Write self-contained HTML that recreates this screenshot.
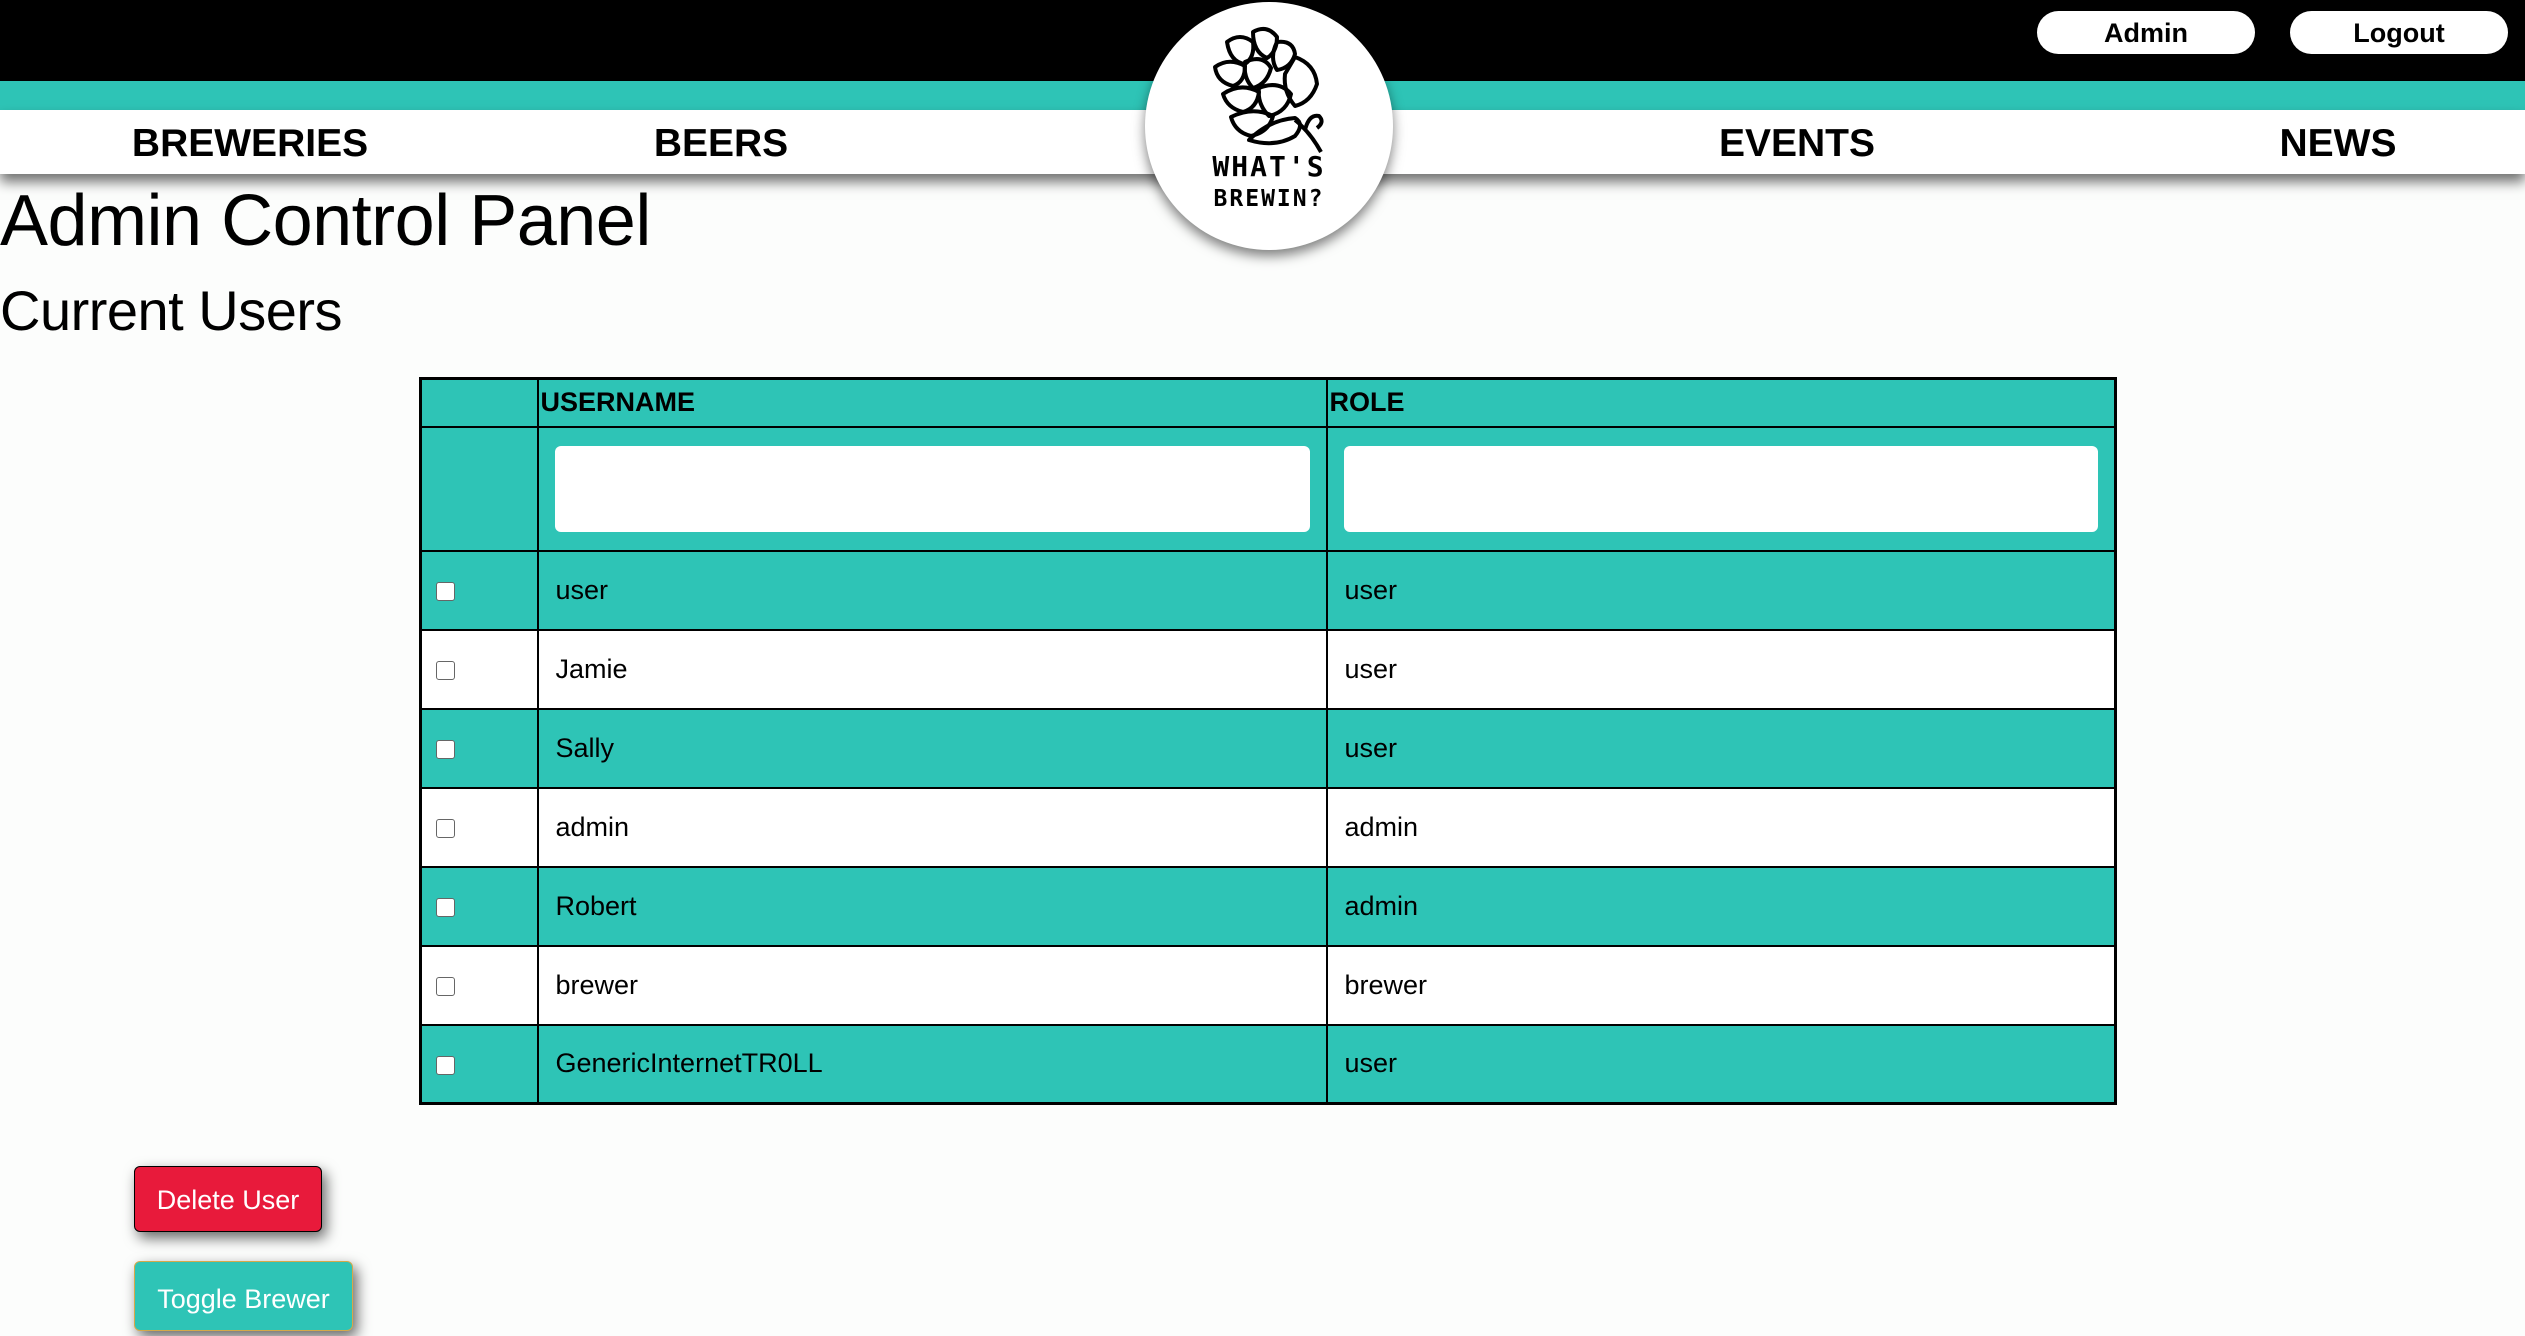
<!DOCTYPE html>
<html><head><meta charset="utf-8"><style>
*{margin:0;padding:0;box-sizing:border-box}
body{width:2525px;height:1312px;overflow:hidden;background:#fcfdfc;font-family:"Liberation Sans",sans-serif;position:relative;color:#000}
.blk{position:absolute;left:0;top:0;width:2525px;height:81px;background:#000}
.tl{position:absolute;left:0;top:81px;width:2525px;height:29px;background:#2ec4b6}
.nav{position:absolute;left:0;top:110px;width:2525px;height:64px;background:#fff;box-shadow:0 8px 12px rgba(0,0,0,.55)}
.nav span{position:absolute;top:12px;font-weight:bold;font-size:39px;transform:translateX(-50%)}
.btn{position:absolute;top:11px;height:43px;width:218px;background:#fff;border-radius:22px;text-align:center;font-weight:bold;font-size:27px;line-height:45px}
.logo{position:absolute;left:1145px;top:2px;width:248px;height:248px;border-radius:50%;background:#fff;box-shadow:0 6px 12px rgba(0,0,0,.5)}
h1{position:absolute;left:0;top:180px;font-weight:normal;font-size:72px;letter-spacing:-0.5px}
h2{position:absolute;left:0;top:278px;font-weight:normal;font-size:56px;letter-spacing:-0.5px}
table{position:absolute;left:419px;top:377px;width:1698px;border-collapse:collapse;border:3px solid #000;font-size:27px}
td,th{border:2px solid #000;text-align:left;vertical-align:middle}
th{height:48px;background:#2ec4b6;font-size:27px;padding-left:2px}
tr.f td{height:124px;background:#2ec4b6}
tr.f div{margin:0 16px;height:86px;background:#fff;border-radius:6px}
tr.r td{height:79px;padding-left:17px}
tr.t td{background:#2ec4b6}
tr.w td{background:#fff}
.cb{display:inline-block;width:19px;height:19px;border:1.5px solid #666;border-radius:3px;background:#fff;margin-left:-3px;vertical-align:middle}
.b{position:absolute;left:134px;color:#fff;font-size:27px;text-align:center;border-radius:6px;box-shadow:4px 6px 14px rgba(0,0,0,.6)}
</style></head><body>
<div class="blk"></div><div class="tl"></div>
<div class="nav">
<span style="left:250px">BREWERIES</span><span style="left:721px">BEERS</span><span style="left:1797px">EVENTS</span><span style="left:2338px">NEWS</span>
</div>
<div class="btn" style="left:2037px">Admin</div>
<div class="btn" style="left:2290px">Logout</div>
<div class="logo">
<svg width="248" height="248" viewBox="0 0 248 248" fill="none" stroke="#000" stroke-width="4" stroke-linejoin="round">
<path d="M82 40 Q95 30 108 40 Q110 55 100 62 Q85 60 82 40Z"/>
<path d="M108 30 Q122 22 132 35 Q132 50 122 56 Q108 50 108 30Z"/>
<path d="M132 40 Q148 38 150 52 Q146 66 132 68 Q124 56 132 40Z"/>
<path d="M70 65 Q84 55 100 64 Q100 80 88 84 Q72 80 70 65Z"/>
<path d="M100 60 Q118 52 126 66 Q122 82 108 86 Q98 76 100 60Z"/>
<path d="M150 55 Q170 62 172 82 Q166 100 150 104 Q138 90 140 72Z"/>
<path d="M78 92 Q96 80 114 90 Q112 106 98 110 Q82 106 78 92Z"/>
<path d="M114 86 Q134 78 146 92 Q142 110 124 114 Q112 102 114 86Z"/>
<path d="M86 115 Q108 104 128 114 Q124 130 106 134 Q90 130 86 115Z"/>
<path d="M104 138 Q124 118 150 116 Q160 122 150 134 Q130 146 104 138Z"/>
<path d="M150 118 Q165 130 176 150"/>
<path d="M160 128 Q164 112 174 114 Q180 120 172 126"/>
</svg>
<div style="position:absolute;left:0;width:248px;top:150px;text-align:center;font-family:'DejaVu Sans Mono',monospace;font-weight:bold;font-size:28px;line-height:30px;letter-spacing:2px">WHAT'S<br><span style="font-size:23px">BREWIN?</span></div>
</div>
<h1>Admin Control Panel</h1>
<h2>Current Users</h2>
<table>
<tr><th style="width:117px"></th><th style="width:789px">USERNAME</th><th>ROLE</th></tr>
<tr class="f"><td></td><td><div></div></td><td><div></div></td></tr>
<tr class="r t"><td><span class="cb"></span></td><td>user</td><td>user</td></tr>
<tr class="r w"><td><span class="cb"></span></td><td>Jamie</td><td>user</td></tr>
<tr class="r t"><td><span class="cb"></span></td><td>Sally</td><td>user</td></tr>
<tr class="r w"><td><span class="cb"></span></td><td>admin</td><td>admin</td></tr>
<tr class="r t"><td><span class="cb"></span></td><td>Robert</td><td>admin</td></tr>
<tr class="r w"><td><span class="cb"></span></td><td>brewer</td><td>brewer</td></tr>
<tr class="r t"><td><span class="cb"></span></td><td>GenericInternetTR0LL</td><td>user</td></tr>
</table>
<div class="b" style="top:1166px;width:188px;height:66px;line-height:66px;background:#e81a3b;border:1px solid #000">Delete User</div>
<div class="b" style="top:1261px;width:219px;height:70px;line-height:74px;background:#2ec4b6;border:1px solid #d4a94a">Toggle Brewer</div>
</body></html>
